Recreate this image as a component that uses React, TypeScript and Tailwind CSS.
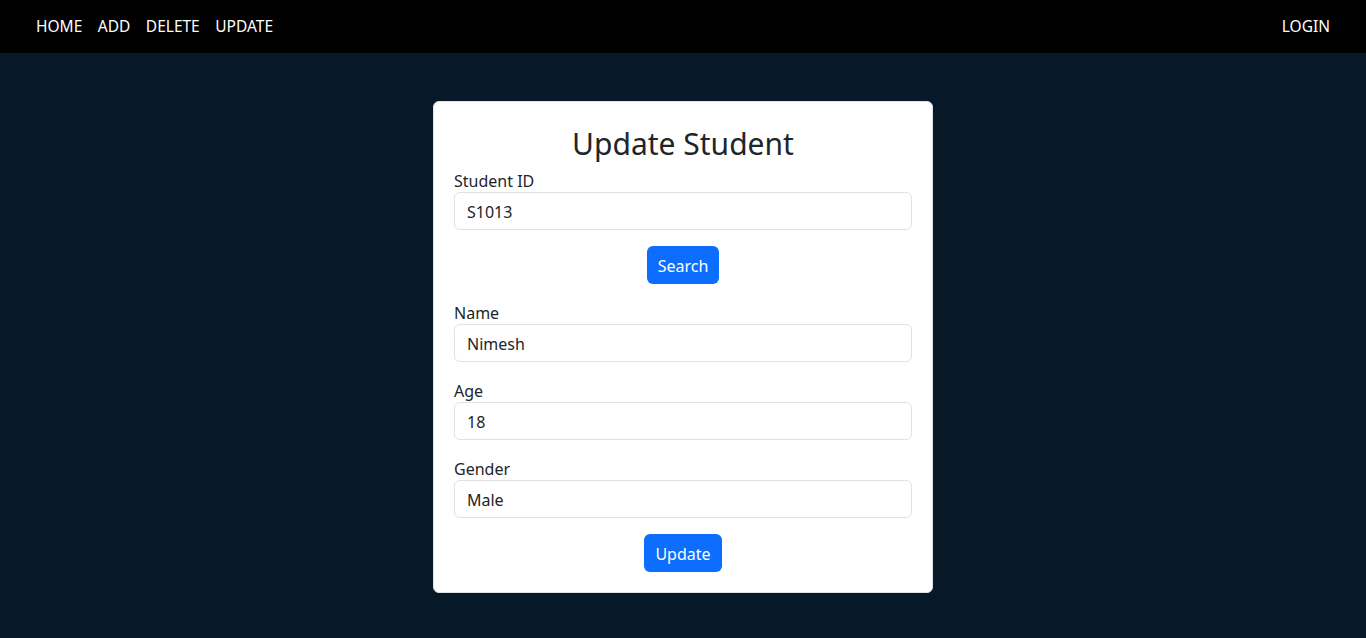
import React from "react"

const font = { fontFamily: '"Segoe UI", "Noto Sans", "Liberation Sans", sans-serif' }

// Satu grup label + input
function Field({ label, value }: { label: string; value: string }) {
  return (
    <div className="flex flex-col">
      <label className="h-[24px] pt-[1px] text-[16px] leading-[24px] text-[#212529]">{label}</label>
      <input
        type="text"
        defaultValue={value}
        className="h-[38px] w-full rounded-[6px] border border-[#dee2e6] bg-white px-[12px] pt-[1px] text-[16px] text-[#212529] outline-none"
      />
    </div>
  )
}

export default function App() {
  return (
    <div className="min-h-[638px] bg-[#071828]" style={font}>
      {/* Navbar */}
      <nav className="flex h-[53px] items-center justify-between bg-black px-[36px] text-[15.5px] text-white">
        <div className="flex items-center gap-[15.5px]">
          <a>HOME</a>
          <a>ADD</a>
          <a>DELETE</a>
          <a>UPDATE</a>
        </div>
        <a>LOGIN</a>
      </nav>

      {/* Card */}
      <div className="flex justify-center pt-[48px]">
        <div className="w-[500px] rounded-[6px] border border-[#dee2e6] bg-white px-[20px] pt-[20px] pb-[20px]">
          <h2 className="mb-[8px] pt-[3px] h-[38px] text-center text-[30px] leading-[38px] text-[#212529]">Update Student</h2>

          <Field label="Student ID" value="S1013" />
          <div className="mt-[16px] flex justify-center">
            <button className="h-[38px] w-[72px] rounded-[6px] bg-[#0d6efd] pt-[1px] text-[16px] text-white">Search</button>
          </div>

          <div className="mt-[16px] flex flex-col gap-[16px]">
            <Field label="Name" value="Nimesh" />
            <Field label="Age" value="18" />
            <Field label="Gender" value="Male" />
          </div>

          <div className="mt-[16px] flex justify-center">
            <button className="h-[38px] w-[78px] rounded-[6px] bg-[#0d6efd] pt-[1px] text-[16px] text-white">Update</button>
          </div>
        </div>
      </div>
    </div>
  )
}
